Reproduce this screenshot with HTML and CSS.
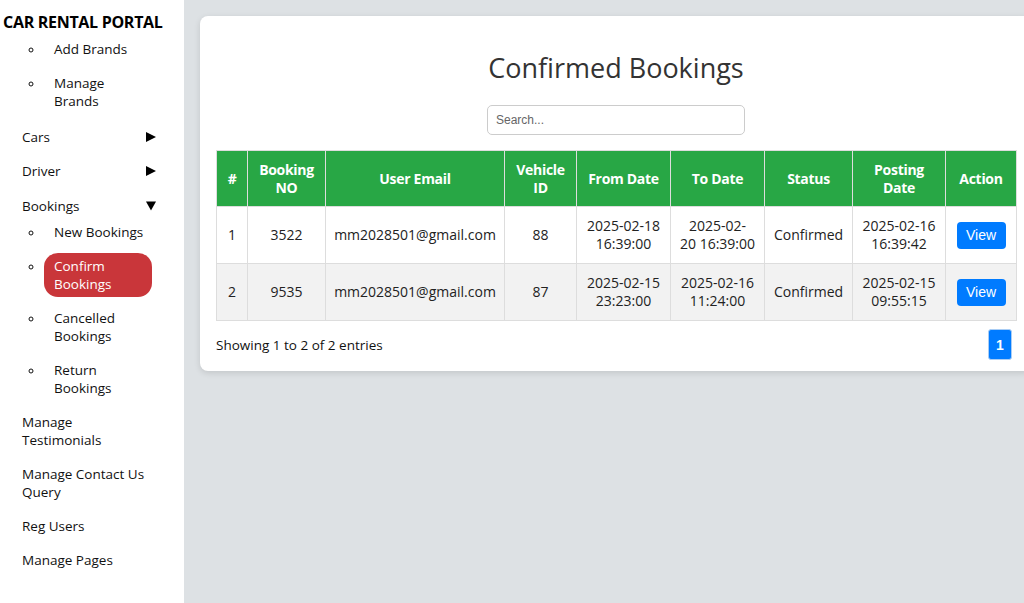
FILE: index.html
```html
<!DOCTYPE html>
<html lang="en">
<head>
<meta charset="utf-8">
<title>Confirmed Bookings</title>
<link rel="stylesheet" href="styles.css">
</head>
<body>
<div class="layout">
  <aside class="sidebar">
    <div class="brand">CAR RENTAL PORTAL</div>
    <ul class="sub first">
      <li><a href="#">Add Brands</a></li>
      <li><a href="#">Manage<br>Brands</a></li>
    </ul>
    <ul class="menu">
      <li><a href="#" class="toggle">Cars <svg class="arrow" viewBox="0 0 10 10"><polygon points="0,0 10,5 0,10"/></svg></a></li>
      <li><a href="#" class="toggle">Driver <svg class="arrow" viewBox="0 0 10 10"><polygon points="0,0 10,5 0,10"/></svg></a></li>
      <li class="open">
        <a href="#" class="toggle">Bookings <svg class="arrow down" viewBox="0 0 11 10"><polygon points="0,0 11,0 5.5,10"/></svg></a>
        <ul class="sub">
          <li><a href="#">New Bookings</a></li>
          <li><a href="#" class="active">Confirm<br>Bookings</a></li>
          <li><a href="#">Cancelled<br>Bookings</a></li>
          <li><a href="#">Return<br>Bookings</a></li>
        </ul>
      </li>
      <li><a href="#">Manage<br>Testimonials</a></li>
      <li><a href="#">Manage Contact Us<br>Query</a></li>
      <li><a href="#">Reg Users</a></li>
      <li><a href="#">Manage Pages</a></li>
    </ul>
  </aside>
  <main class="main">
    <section class="card">
      <h2 class="title">Confirmed Bookings</h2>
      <div class="search-row"><input class="search" type="text" placeholder="Search..."></div>
      <table class="bookings">
        <colgroup>
          <col class="c-num"><col class="c-bno"><col class="c-email"><col class="c-vid"><col class="c-from"><col class="c-to"><col class="c-status"><col class="c-post"><col class="c-action">
        </colgroup>
        <thead>
          <tr>
            <th>#</th>
            <th>Booking<br>NO</th>
            <th>User Email</th>
            <th>Vehicle<br>ID</th>
            <th>From Date</th>
            <th>To Date</th>
            <th>Status</th>
            <th>Posting<br>Date</th>
            <th>Action</th>
          </tr>
        </thead>
        <tbody>
          <tr>
            <td>1</td>
            <td>3522</td>
            <td>mm2028501@gmail.com</td>
            <td>88</td>
            <td>2025-02-18<br>16:39:00</td>
            <td>2025-02-<br>20 16:39:00</td>
            <td>Confirmed</td>
            <td>2025-02-16<br>16:39:42</td>
            <td><button class="btn-view">View</button></td>
          </tr>
          <tr>
            <td>2</td>
            <td>9535</td>
            <td>mm2028501@gmail.com</td>
            <td>87</td>
            <td>2025-02-15<br>23:23:00</td>
            <td>2025-02-16<br>11:24:00</td>
            <td>Confirmed</td>
            <td>2025-02-15<br>09:55:15</td>
            <td><button class="btn-view">View</button></td>
          </tr>
        </tbody>
      </table>
      <div class="table-footer">
        <span class="info">Showing 1 to 2 of 2 entries</span>
        <button class="page">1</button>
      </div>
    </section>
  </main>
</div>
</body>
</html>
```
FILE: styles.css
```css
html, body {
  margin: 0;
  padding: 0;
  height: 100%;
}
body {
  font-family: "Open Sans", "Liberation Sans", sans-serif;
  color: #111;
  background: #dde1e4;
  overflow: hidden;
}
.layout {
  display: flex;
  height: 603px;
}
.sidebar {
  width: 184px;
  flex-shrink: 0;
  background: #fff;
  padding-top: 12px;
  box-sizing: border-box;
}
.brand {
  font-weight: 700;
  font-size: 16px;
  line-height: 20px;
  padding-left: 3px;
  color: #000;
  letter-spacing: -0.3px;
}
.sidebar ul {
  margin: 0;
  list-style: none;
}
.sidebar a {
  display: block;
  color: #111;
  text-decoration: none;
  font-size: 13.5px;
  line-height: 18px;
  padding: 4px 10px;
  white-space: nowrap;
}
.menu {
  padding: 0 18px 0 12px;
  margin-top: 10px !important;
}
.menu > li + li {
  margin-top: 8px;
}
.menu > li.open {
  margin-top: 9px;
}
.toggle {
  display: flex !important;
  justify-content: space-between;
  align-items: center;
}
.arrow {
  width: 10px;
  height: 10px;
  fill: #000;
}
.sub {
  list-style: circle !important;
  padding: 0;
  margin: 0 14px 0 32px !important;
}
.sub.first {
  margin: 4px 0 0 44px !important;
  width: 108px;
}
.sub li {
  font-size: 12px;
}
.sub li + li {
  margin-top: 8px;
}
.sub a.active {
  background: #c9363a;
  color: #fff;
  border-radius: 14px;
}
.main {
  flex: 1;
  min-width: 0;
  padding: 16px;
  overflow: hidden;
}
.card {
  width: 832px;
  box-sizing: border-box;
  background: #fff;
  border-radius: 8px;
  box-shadow: 0 2px 6px rgba(0, 0, 0, 0.12);
  padding: 20px 16px 11px;
}
.title {
  margin: 15px 0 20px;
  text-align: center;
  font-size: 27px;
  line-height: 34px;
  font-weight: 500;
  color: #333;
}
.search-row {
  display: flex;
  justify-content: center;
  margin-bottom: 15px;
}
.search {
  width: 258px;
  height: 30px;
  box-sizing: border-box;
  border: 1px solid #ccc;
  border-radius: 5px;
  padding: 0 8px;
  font-family: "Liberation Sans", Arial, sans-serif;
  font-size: 12px;
  color: #333;
}
.search::placeholder {
  color: #666;
}
.bookings {
  width: 800px;
  table-layout: fixed;
  border-collapse: collapse;
  font-size: 14px;
}
.c-num { width: 31px; }
.c-bno { width: 78px; }
.c-email { width: 179px; }
.c-vid { width: 72px; }
.c-from { width: 94px; }
.c-to { width: 94px; }
.c-status { width: 88px; }
.c-post { width: 93px; }
.c-action { width: 71px; }
.bookings th, .bookings td {
  border: 1px solid #ddd;
  text-align: center;
  line-height: 18px;
  white-space: nowrap;
  padding: 0;
}
.bookings th {
  background: #28a745;
  color: #fff;
  font-weight: 700;
  height: 55px;
  letter-spacing: -0.3px;
}
.bookings td {
  height: 56px;
  color: #222;
}
.bookings tbody tr:nth-child(2) td {
  background: #f2f2f2;
}
.btn-view {
  background: #007bff;
  color: #fff;
  border: none;
  border-radius: 4px;
  font-family: "Liberation Sans", Arial, sans-serif;
  font-size: 14px;
  width: 49px;
  height: 27px;
  padding: 0;
}
.table-footer {
  display: flex;
  justify-content: space-between;
  align-items: center;
  margin-top: 8px;
}
.info {
  font-size: 13.5px;
  color: #111;
}
.page {
  width: 24px;
  height: 31px;
  margin-right: 4px;
  background: #007bff;
  color: #fff;
  border: 1px solid #a9cdf5;
  border-radius: 3px;
  font-family: "Liberation Sans", Arial, sans-serif;
  font-weight: 700;
  font-size: 14px;
  padding: 0;
}
```
